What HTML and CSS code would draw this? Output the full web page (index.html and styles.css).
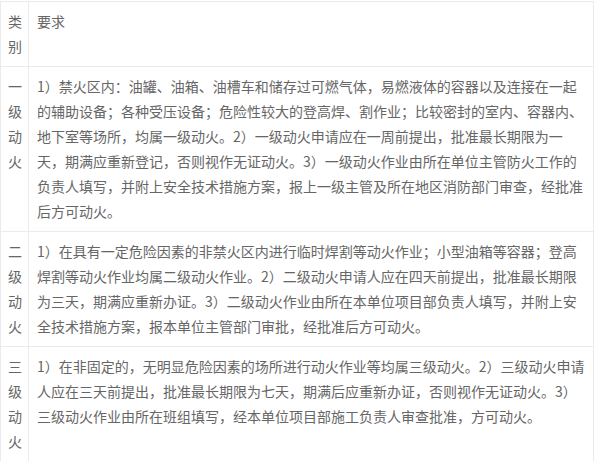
FILE: index.html
```html
<!DOCTYPE html>
<html lang="zh-CN">
<head>
<meta charset="utf-8">
<title>动火等级要求</title>
<link rel="stylesheet" href="styles.css">
</head>
<body>
<table class="rules">
  <tbody>
    <tr>
      <td class="kind">类别</td>
      <td class="req">要求</td>
    </tr>
    <tr>
      <td class="kind">一级动火</td>
      <td class="req">1）禁火区内：油罐、油箱、油槽车和储存过可燃气体，易燃液体的容器以及连接在一起的辅助设备；各种受压设备；危险性较大的登高焊、割作业；比较密封的室内、容器内、地下室等场所，均属一级动火。2）一级动火申请应在一周前提出，批准最长期限为一天，期满应重新登记，否则视作无证动火。3）一级动火作业由所在单位主管防火工作的负责人填写，并附上安全技术措施方案，报上一级主管及所在地区消防部门审查，经批准后方可动火。</td>
    </tr>
    <tr>
      <td class="kind">二级动火</td>
      <td class="req">1）在具有一定危险因素的非禁火区内进行临时焊割等动火作业；小型油箱等容器；登高焊割等动火作业均属二级动火作业。2）二级动火申请人应在四天前提出，批准最长期限为三天，期满应重新办证。3）二级动火作业由所在本单位项目部负责人填写，并附上安全技术措施方案，报本单位主管部门审批，经批准后方可动火。</td>
    </tr>
    <tr>
      <td class="kind">三级动火</td>
      <td class="req">1）在非固定的，无明显危险因素的场所进行动火作业等均属三级动火。2）三级动火申请人应在三天前提出，批准最长期限为七天，期满后应重新办证，否则视作无证动火。3）三级动火作业由所在班组填写，经本单位项目部施工负责人审查批准，方可动火。</td>
    </tr>
  </tbody>
</table>
</body>
</html>
```

FILE: styles.css
```css
html, body {
  margin: 0;
  padding: 0;
  background: #ffffff;
}

body {
  padding-top: 1px;
  font-family: "Noto Sans CJK SC", "Noto Sans", sans-serif;
  font-size: 14px;
  line-height: 25px;
  color: #666666;
}

.rules {
  border-collapse: collapse;
  width: 594px;
  table-layout: fixed;
}

.rules td {
  border: 1px solid #ebebeb;
  vertical-align: top;
  padding: 7px 8px;
  word-break: break-all;
}

.rules td.kind {
  width: 14px;
  padding: 7px 6px 7px 7px;
}
```
